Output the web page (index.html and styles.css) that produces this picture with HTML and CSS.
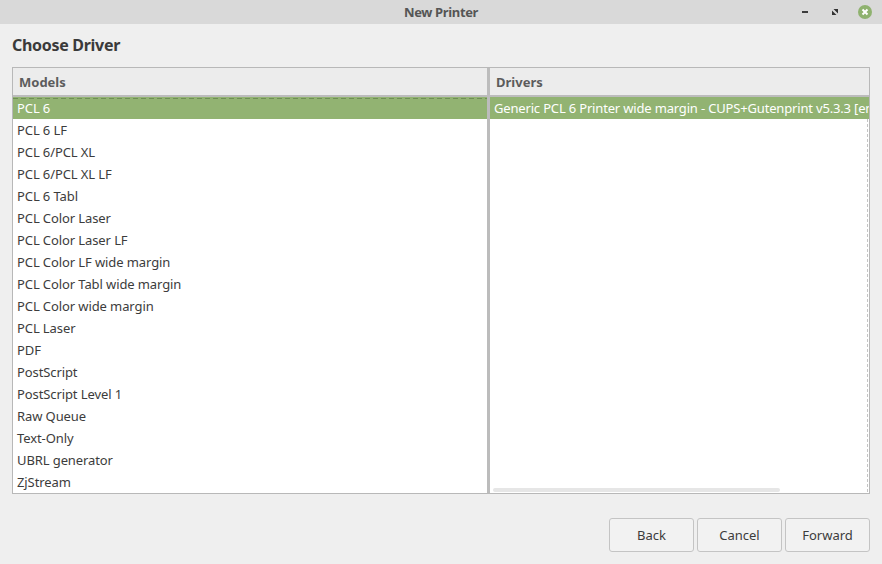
FILE: index.html
```html
<!DOCTYPE html>
<html lang="en">
<head>
<meta charset="utf-8">
<title>New Printer</title>
<link rel="stylesheet" href="styles.css">
</head>
<body>
<div class="window">
  <header class="titlebar">
    <span class="title">New Printer</span>
    <div class="controls">
      <svg class="ctl" width="10" height="10" viewBox="0 0 10 10"><rect x="0" y="4" width="6" height="2" fill="#3c3c3c"/></svg>
      <svg class="ctl" width="10" height="10" viewBox="0 0 10 10"><path d="M3.500 2H8V6.500ZM2 3.500L6.500 8H2Z" fill="#333"/></svg>
      <svg class="close" width="14" height="14" viewBox="0 0 14 14"><circle cx="7" cy="7" r="7" fill="#8fb26f"/><path d="M4.500 4.500L9.500 9.500M9.500 4.500L4.500 9.500" stroke="#fff" stroke-width="2"/></svg>
    </div>
  </header>
  <main class="content">
    <h1 class="heading">Choose Driver</h1>
    <div class="frame">
      <section class="pane models">
        <div class="colhead">Models</div>
        <ul class="list">
          <li class="row selected focus">PCL 6</li>
          <li class="row">PCL 6 LF</li>
          <li class="row">PCL 6/PCL XL</li>
          <li class="row">PCL 6/PCL XL LF</li>
          <li class="row">PCL 6 Tabl</li>
          <li class="row">PCL Color Laser</li>
          <li class="row">PCL Color Laser LF</li>
          <li class="row">PCL Color LF wide margin</li>
          <li class="row">PCL Color Tabl wide margin</li>
          <li class="row">PCL Color wide margin</li>
          <li class="row">PCL Laser</li>
          <li class="row">PDF</li>
          <li class="row">PostScript</li>
          <li class="row">PostScript Level 1</li>
          <li class="row">Raw Queue</li>
          <li class="row">Text-Only</li>
          <li class="row">UBRL generator</li>
          <li class="row">ZjStream</li>
        </ul>
      </section>
      <div class="divider"></div>
      <section class="pane drivers">
        <div class="colhead">Drivers</div>
        <ul class="list">
          <li class="row selected tight">Generic PCL 6 Printer wide margin - CUPS+Gutenprint v5.3.3 [en]</li>
        </ul>
        <div class="overshoot"></div>
        <div class="hscroll"></div>
      </section>
    </div>
    <footer class="actions">
      <button class="btn">Back</button>
      <button class="btn">Cancel</button>
      <button class="btn">Forward</button>
    </footer>
  </main>
</div>
</body>
</html>
```
FILE: styles.css
```css
* { box-sizing: border-box; }
html, body { margin: 0; padding: 0; }
body {
  width: 882px;
  height: 564px;
  overflow: hidden;
  font-family: "Noto Sans", "Open Sans", sans-serif;
  font-size: 13px;
  color: #3c3c3c;
  background: #efefef;
}
.window { display: flex; flex-direction: column; height: 564px; }
.titlebar {
  height: 24px;
  flex: none;
  position: relative;
  display: flex;
  align-items: center;
  justify-content: center;
  background: #d9d9d9;
}
.title { font-size: 13px; font-weight: 700; color: #555; letter-spacing: -0.35px; }
.controls {
  position: absolute;
  right: 10px;
  top: 5px;
  display: flex;
  align-items: center;
  gap: 18px;
}
.ctl, .close { display: block; }
.content {
  flex: 1;
  display: flex;
  flex-direction: column;
  padding: 0 12px 12px;
  min-height: 0;
}
.heading {
  margin: 11px 0 0;
  height: 32px;
  font-size: 16px;
  line-height: 21px;
  font-weight: 700;
  color: #3a3a3a;
  letter-spacing: -0.3px;
}
.frame {
  height: 427px;
  flex: none;
  display: flex;
  border: 1px solid #b8b8b8;
  background: #fff;
}
.pane { position: relative; min-width: 0; overflow: hidden; display: flex; flex-direction: column; }
.models { width: 474px; flex: none; }
.drivers { flex: 1; }
.divider { width: 3px; flex: none; background: #bcbcbc; }
.colhead {
  height: 29px;
  flex: none;
  padding-left: 6px;
  line-height: 28px;
  font-size: 13px;
  font-weight: 700;
  color: #5c5c5c;
  background: #ececec;
  border-bottom: 2px solid #bcbcbc;
}
.list { list-style: none; margin: 0; padding: 0; }
.row {
  height: 22px;
  line-height: 22px;
  padding-left: 4px;
  white-space: nowrap;
  color: #3c3c3c;
  letter-spacing: -0.1px;
}
.selected { background-color: #92b372; color: #fff; }
.tight { letter-spacing: -0.17px; }
.focus {
  background-image: repeating-linear-gradient(90deg, #6f8f55 0 5px, transparent 5px 8px);
  background-size: 100% 1px;
  background-position: 0 1px;
  background-repeat: no-repeat;
}
.overshoot {
  position: absolute;
  right: 1px;
  top: 51px;
  bottom: 1px;
  border-right: 1px dashed #c4c4c4;
}
.hscroll {
  position: absolute;
  left: 3px;
  bottom: 1px;
  width: 287px;
  height: 4px;
  border-radius: 2px;
  background: #e6e6e6;
}
.actions {
  margin-top: 24px;
  display: flex;
  justify-content: flex-end;
  gap: 3px;
}
.btn {
  width: 85px;
  height: 34px;
  font: inherit;
  color: #3c3c3c;
  border: 1px solid #c4c4c4;
  border-radius: 3px;
  background: #f2f2f2;
  padding: 0;
}
```
